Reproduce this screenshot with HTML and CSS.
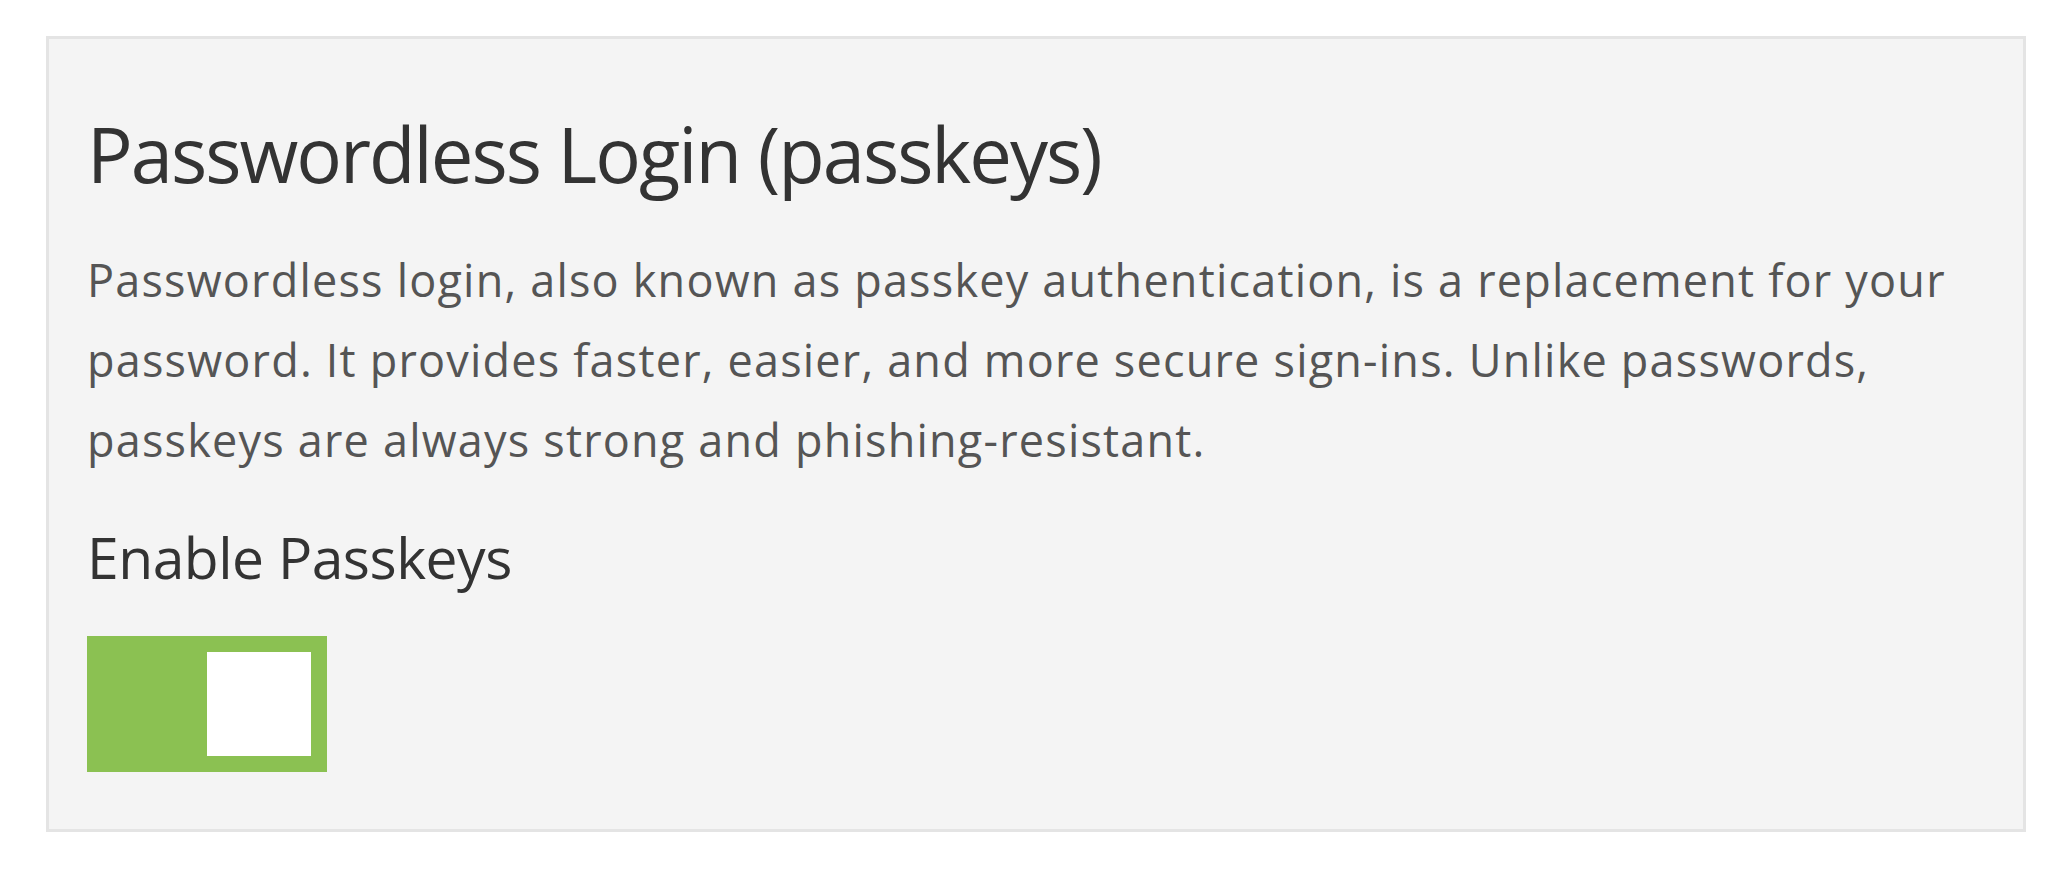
FILE: index.html
```html
<!DOCTYPE html>
<html lang="en">
<head>
    <meta charset="UTF-8">
    <meta name="viewport" content="width=device-width, initial-scale=1.0">
    <title>Passwordless Login</title>
    <link rel="stylesheet" href="styles.css">
</head>
<body>
    <div class="panel">
        <h2>Passwordless Login (passkeys)</h2>
        <p class="description">Passwordless login, also known as passkey authentication, is a replacement for your password. It provides faster, easier, and more secure sign-ins. Unlike passwords, passkeys are always strong and phishing-resistant.</p>
        <div class="form-group">
            <label for="enablePasskeys">Enable Passkeys</label>
            <label class="switch">
                <input type="checkbox" id="enablePasskeys" checked>
                <span class="slider"></span>
            </label>
        </div>
    </div>
</body>
</html>
```

FILE: styles.css
```css
body {
    font-family: "Open Sans", Arial, sans-serif;
    background-color: #ffffff;
    margin: 0;
    padding: 36px 38px 0 46px;
}

.panel {
    background-color: #f4f4f4;
    border: 3px solid #e4e4e4;
    padding: 38px 38px 57px 38px;
}

h2 {
    font-size: 76px;
    font-weight: 400;
    line-height: 91px;
    letter-spacing: -2px;
    color: #333333;
    margin: 31px 0 0 0;
}

.description {
    font-size: 45px;
    line-height: 80px;
    letter-spacing: 1.2px;
    color: #555555;
    margin: 41px 0 0 0;
}

.form-group label[for] {
    display: block;
    font-size: 57px;
    line-height: 68px;
    letter-spacing: -0.5px;
    color: #333333;
    margin-top: 43px;
}

.switch {
    display: block;
    position: relative;
    width: 240px;
    height: 136px;
    margin-top: 45px;
    cursor: pointer;
}

.switch input {
    display: none;
}

.slider {
    position: absolute;
    inset: 0;
    background-color: #cccccc;
}

.slider::before {
    content: "";
    position: absolute;
    top: 16px;
    left: 16px;
    width: 104px;
    height: 104px;
    background-color: #ffffff;
}

.switch input:checked + .slider {
    background-color: #8bc152;
}

.switch input:checked + .slider::before {
    left: 120px;
}
```
